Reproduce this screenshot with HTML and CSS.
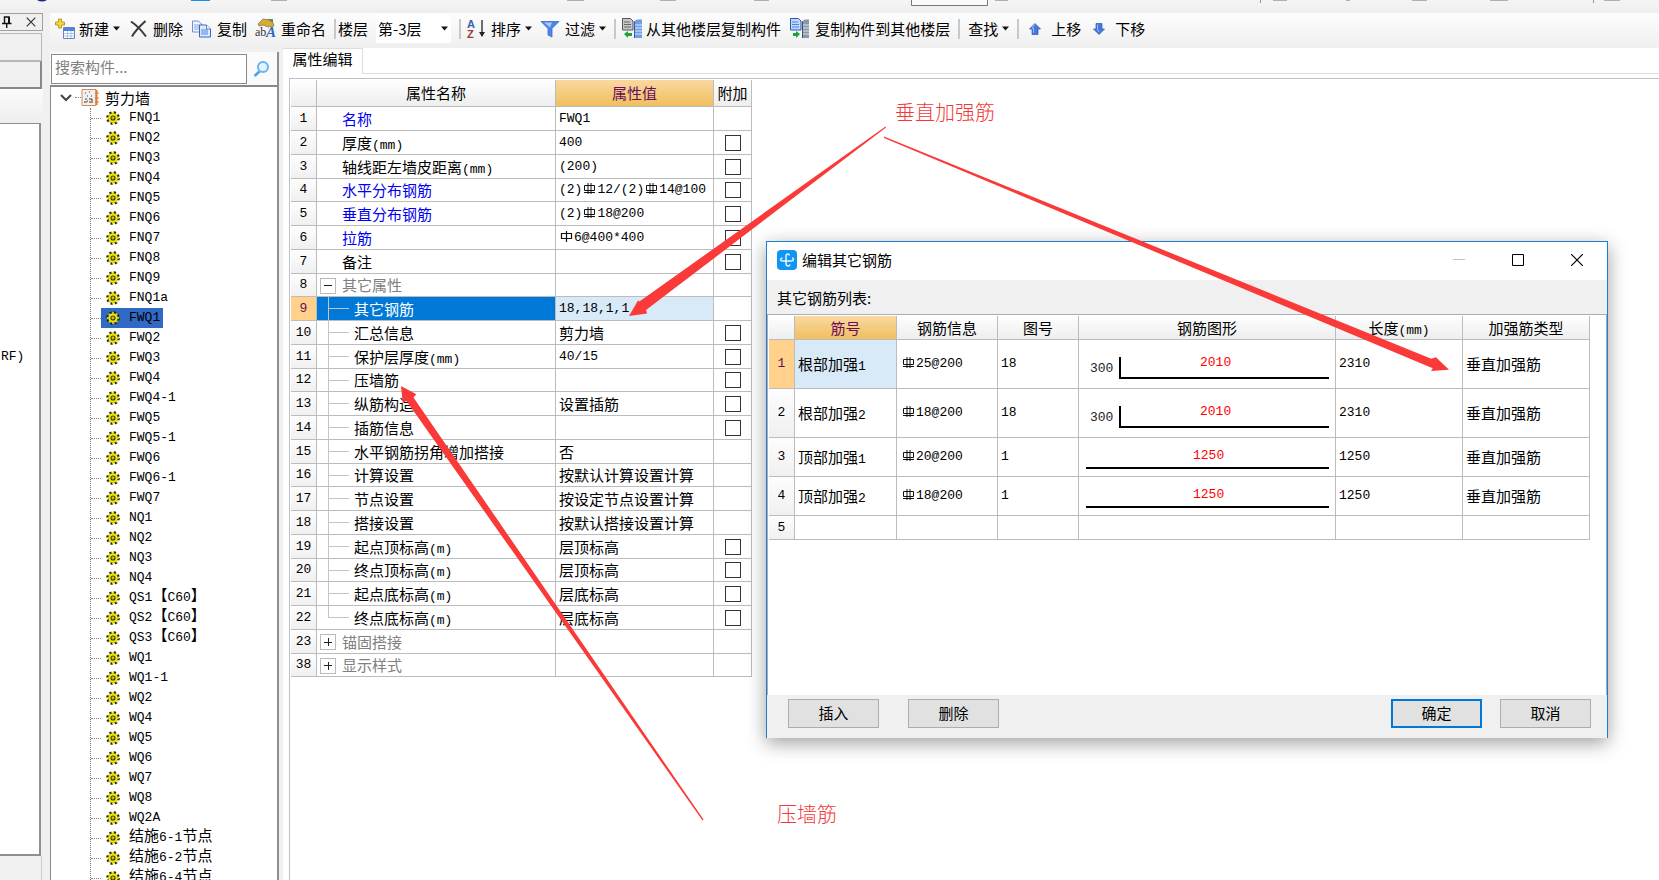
FILE: index.html
```html
<!DOCTYPE html>
<html lang="zh-CN">
<head>
<meta charset="utf-8">
<title>属性编辑</title>
<link rel="stylesheet" href="styles.css">
</head>
<body>
<svg class="defs" aria-hidden="true">
  <symbol id="gear" viewBox="0 0 14 14">
    <circle cx="7" cy="7" r="5.6" fill="none" stroke="#222200" stroke-width="2.4" stroke-dasharray="2.2 2.2"/>
    <circle cx="7" cy="7" r="4.8" fill="#f2ee10" stroke="#55550a" stroke-width=".6"/>
    <path d="M7 1v12M1 7h12M2.8 2.8l8.4 8.4M11.2 2.8l-8.4 8.4" stroke="#e8e410" stroke-width="1.4"/>
    <circle cx="7" cy="7" r="2" fill="#f2ee10" stroke="#333300" stroke-width="1.1"/>
    <circle cx="7" cy="7" r=".6" fill="#333300"/>
  </symbol>
  <symbol id="rebar3" viewBox="0 0 15 15">
    <path d="M2.500 4.500h10v5h-10zM6 2v11M9 2v11M2 11.500h11" fill="none" stroke="#111" stroke-width="1"/>
  </symbol>
  <symbol id="rebar1" viewBox="0 0 15 15">
    <path d="M2.500 4.500h10v5h-10zM7.500 2v11" fill="none" stroke="#111" stroke-width="1.200"/>
  </symbol>
  <symbol id="caret" viewBox="0 0 7 5"><path d="M0 .5h7L3.500 4.500z" fill="#111"/></symbol>
</svg>

<header class="strip">
  <svg width="1659" height="13" aria-hidden="true">
    <path d="M37 0h10q-5 3-10 0z" fill="#1b2a7a"/>
    <path d="M191 0h19v1h-19z" fill="#1a8fe8"/>
    <path d="M271 0h16v1h-16zM567 0h17v1h-17zM660 0h16v1h-16zM754 0h15v1h-15zM995 0h13v1h-13zM1273 0h14v1h-14zM1346 0h4v1h-4zM1412 0h15v1h-15zM1490 0h18v1h-18zM1604 0h16v1h-16z" fill="#b0b0b0"/>
    <path d="M911.500 0v5.500h76V0" fill="#fafafa" stroke="#777"/>
    <path d="M1260.500 0v3M1593.500 0v3" stroke="#999"/>
  </svg>
</header>

<div class="app">
  <aside class="dock">
    <div class="dock-head">
      <button class="dock-btn" aria-label="固定"><svg width="10" height="12" viewBox="0 0 10 12"><path d="M2.500 7V1h4.500v6M0 7.500h9.500M4.700 7.500V12" fill="none" stroke="#111" stroke-width="1.400"/><path d="M6 1h2v6H6z" fill="#111"/></svg></button>
      <button class="dock-btn" aria-label="关闭"><svg width="10" height="10" viewBox="0 0 10 10"><path d="M.7.7l8.600 8.600M9.300.7L.7 9.300" stroke="#333" stroke-width="1.200"/></svg></button>
    </div>
    <div class="dock-box"></div>
    <div class="dock-box dock-box-dark"></div>
    <div class="dock-fade"></div>
    <div class="dock-list"><span class="lat">RF)</span></div>
    <div class="dock-foot"></div>
  </aside>

  <main class="main">
    <nav class="toolbar">
      <button class="tool"><svg width="20" height="22" viewBox="0 0 20 22"><path d="M3.500 1h3v3h3v3h-3v3h-3V7h-3V4h3z" fill="#f6d92c" stroke="#a8891a" stroke-width=".8"/><path d="M8.500 9.500h11v11h-11z" fill="#fff" stroke="#6584b8"/><path d="M9 10h10v3H9z" fill="#4f83df"/><path d="M9 15.500h10M9 18h10M12.500 13v7M16 13v7" stroke="#9cb6e4" stroke-width=".8"/></svg>新建<svg width="7" height="5"><use href="#caret"/></svg></button>
      <button class="tool"><svg width="21" height="18" viewBox="0 0 21 18"><path d="M3 1.500C9 5.500 14 11 18 16.500M17.500 1C12 6 7 11 4 16.500" fill="none" stroke="#3a3a3a" stroke-width="2"/></svg>删除</button>
      <button class="tool"><svg width="22" height="18" viewBox="0 0 22 18"><path d="M1.500 1h6l3 3v8h-9z" fill="#eef4ff" stroke="#6f92cf"/><path d="M3 5h6M3 7h6M3 9h6" stroke="#86a7df"/><path d="M8.500 5h7l4 4v8h-11z" fill="#dfeaff" stroke="#3e68b4"/><path d="M15.500 5v4h4" fill="#fff" stroke="#3e68b4" stroke-width=".8"/><path d="M10 10h7M10 12h7M10 14h7" stroke="#4f83df"/></svg>复制</button>
      <button class="tool"><svg width="22" height="21" viewBox="0 0 22 21"><path d="M3 6l5-5 9 1 2 6-6 1-5-2-4 1z" fill="#d8aa3a" stroke="#8b7134" stroke-width=".7"/><path d="M12 1h6v4z" fill="#5f8e58"/><text x="0" y="18" class="icon-ab">ab</text><text x="11" y="19" class="icon-a">A</text></svg>重命名</button>
      <div class="group group-tight">
        <label for="floor">楼层</label>
        <span class="combo"><select id="floor"><option>第-3层</option></select><svg width="7" height="5"><use href="#caret"/></svg></span>
      </div>
      <div class="group">
        <button class="tool"><svg width="21" height="20" viewBox="0 0 21 20"><text x="1" y="9" class="icon-sort-a">A</text><text x="1" y="19" class="icon-sort-z">Z</text><path d="M16 1v16" stroke="#222" stroke-width="1.300"/><path d="M13 13h6l-3 5z" fill="#222"/></svg>排序<svg width="7" height="5"><use href="#caret"/></svg></button>
        <button class="tool"><svg width="21" height="18" viewBox="0 0 21 18"><path d="M1 1.500h18l-7 7V17l-4-2V8.500z" fill="#4d86e8" stroke="#3b68c6" stroke-width=".8"/><path d="M4 2.500h8l-2 5z" fill="#a8c8fa"/></svg>过滤<svg width="7" height="5"><use href="#caret"/></svg></button>
      </div>
      <div class="group">
        <button class="tool"><svg width="21" height="21" viewBox="0 0 21 21"><path d="M1.500.5h8l2.500 2.500v9H1.500z" fill="#c8c8c8" stroke="#555"/><path d="M3 4h6M3 6.500h7M3 9h7" stroke="#666"/><path d="M3 16l4-3v2h4v3H7v2z" fill="#20a040"/><path d="M13 3.500l3-2h5V20h-8z" fill="#6f9fe4"/><path d="M13 7h8M13 10h8M13 13h8M13 16h8" stroke="#dbe8fb"/><path d="M13.500 3.500V20" stroke="#2a5ea8"/></svg>从其他楼层复制构件</button>
        <button class="tool"><svg width="22" height="21" viewBox="0 0 22 21"><path d="M1.500.5h8l2.500 2.500v9H1.500z" fill="#c4d8fb" stroke="#2455b8"/><path d="M3 4h6M3 6.500h7M3 9h7" stroke="#4f83df"/><path d="M11 16l-4-3v2H4v3h3v2z" fill="#20a040"/><path d="M13 3.500l3-2h4V20h-7z" fill="#8997a6"/><path d="M13 7h7M13 10h7M13 13h7M13 16h7" stroke="#dfe4e9"/><path d="M13.500 3.500V20" stroke="#44525f"/></svg>复制构件到其他楼层</button>
      </div>
      <div class="group group-wide">
        <button class="tool">查找<svg width="7" height="5"><use href="#caret"/></svg></button>
      </div>
      <div class="group group-wide">
        <button class="tool"><svg width="20" height="12" viewBox="0 0 20 12"><path d="M8 .5l5.500 5.500H11v5.500H5V6H2.500z" fill="#4577dc" stroke="#2f58b0" stroke-width=".7"/><path d="M8 1.500L5 5h1.500v5" fill="none" stroke="#9bbcf6"/></svg>上移</button>
        <button class="tool"><svg width="22" height="12" viewBox="0 0 22 12"><path d="M10 11.500L4.500 6H7V.5h6V6h2.500z" fill="#4577dc" stroke="#2f58b0" stroke-width=".7"/><path d="M8.500 1.500v5L10 9" fill="none" stroke="#9bbcf6"/></svg>下移</button>
      </div>
    </nav>

    <div class="work">
      <section class="tree-panel">
        <div class="search">
          <input type="text" placeholder="搜索构件..." aria-label="搜索构件">
          <button class="search-btn" aria-label="搜索"><svg width="18" height="18" viewBox="0 0 18 18"><path d="M6.500 11.500L1.500 16" stroke="#4aa3e6" stroke-width="2.600"/><circle cx="10" cy="7" r="5" fill="#e6f4ff" stroke="#67b4ee" stroke-width="2"/></svg></button>
        </div>
        <div class="tree">
          <div class="root"><svg width="12" height="8" viewBox="0 0 12 8"><path d="M1 1l5 5 5-5" fill="none" stroke="#444" stroke-width="2"/></svg><i></i><svg width="18" height="17" viewBox="0 0 18 17"><path d="M1 .5h14v16H1z" fill="#f2f0ee" stroke="#d08a60"/><path d="M4 4h1M8 3h1M6 7h1M10 7h1M4 10h2M8 10h3M3 13h3M8 13h4M6 12h1M10 11h2" stroke="#777" stroke-width="1.500"/><path d="M15.500 1v15" stroke="#e07a30" stroke-width="2"/><path d="M14 4h4M14 9h4M14 13h4" stroke="#e07a30"/></svg><span>剪力墙</span></div>
          <ul>
            <li><a href="#"><svg><use href="#gear"/></svg>FNQ1</a></li>
            <li><a href="#"><svg><use href="#gear"/></svg>FNQ2</a></li>
            <li><a href="#"><svg><use href="#gear"/></svg>FNQ3</a></li>
            <li><a href="#"><svg><use href="#gear"/></svg>FNQ4</a></li>
            <li><a href="#"><svg><use href="#gear"/></svg>FNQ5</a></li>
            <li><a href="#"><svg><use href="#gear"/></svg>FNQ6</a></li>
            <li><a href="#"><svg><use href="#gear"/></svg>FNQ7</a></li>
            <li><a href="#"><svg><use href="#gear"/></svg>FNQ8</a></li>
            <li><a href="#"><svg><use href="#gear"/></svg>FNQ9</a></li>
            <li><a href="#"><svg><use href="#gear"/></svg>FNQ1a</a></li>
            <li><a href="#" class="current"><svg><use href="#gear"/></svg>FWQ1</a></li>
            <li><a href="#"><svg><use href="#gear"/></svg>FWQ2</a></li>
            <li><a href="#"><svg><use href="#gear"/></svg>FWQ3</a></li>
            <li><a href="#"><svg><use href="#gear"/></svg>FWQ4</a></li>
            <li><a href="#"><svg><use href="#gear"/></svg>FWQ4-1</a></li>
            <li><a href="#"><svg><use href="#gear"/></svg>FWQ5</a></li>
            <li><a href="#"><svg><use href="#gear"/></svg>FWQ5-1</a></li>
            <li><a href="#"><svg><use href="#gear"/></svg>FWQ6</a></li>
            <li><a href="#"><svg><use href="#gear"/></svg>FWQ6-1</a></li>
            <li><a href="#"><svg><use href="#gear"/></svg>FWQ7</a></li>
            <li><a href="#"><svg><use href="#gear"/></svg>NQ1</a></li>
            <li><a href="#"><svg><use href="#gear"/></svg>NQ2</a></li>
            <li><a href="#"><svg><use href="#gear"/></svg>NQ3</a></li>
            <li><a href="#"><svg><use href="#gear"/></svg>NQ4</a></li>
            <li><a href="#"><svg><use href="#gear"/></svg><span>QS1<b>【</b>C60<b>】</b></span></a></li>
            <li><a href="#"><svg><use href="#gear"/></svg><span>QS2<b>【</b>C60<b>】</b></span></a></li>
            <li><a href="#"><svg><use href="#gear"/></svg><span>QS3<b>【</b>C60<b>】</b></span></a></li>
            <li><a href="#"><svg><use href="#gear"/></svg>WQ1</a></li>
            <li><a href="#"><svg><use href="#gear"/></svg>WQ1-1</a></li>
            <li><a href="#"><svg><use href="#gear"/></svg>WQ2</a></li>
            <li><a href="#"><svg><use href="#gear"/></svg>WQ4</a></li>
            <li><a href="#"><svg><use href="#gear"/></svg>WQ5</a></li>
            <li><a href="#"><svg><use href="#gear"/></svg>WQ6</a></li>
            <li><a href="#"><svg><use href="#gear"/></svg>WQ7</a></li>
            <li><a href="#"><svg><use href="#gear"/></svg>WQ8</a></li>
            <li><a href="#"><svg><use href="#gear"/></svg>WQ2A</a></li>
            <li><a href="#"><svg><use href="#gear"/></svg><span><b>结施</b>6-1<b>节点</b></span></a></li>
            <li><a href="#"><svg><use href="#gear"/></svg><span><b>结施</b>6-2<b>节点</b></span></a></li>
            <li><a href="#"><svg><use href="#gear"/></svg><span><b>结施</b>6-4<b>节点</b></span></a></li>
          </ul>
        </div>
      </section>

      <section class="editor">
        <div class="tabs"><button class="tab">属性编辑</button></div>
        <div class="sheet">
          <table class="grid props">
            <colgroup><col class="c-num"><col class="c-name"><col class="c-value"><col class="c-add"></colgroup>
            <thead><tr><th></th><th>属性名称</th><th class="hot">属性值</th><th>附加</th></tr></thead>
            <tbody>
              <tr><th>1</th><td class="key">名称</td><td class="lat">FWQ1</td><td></td></tr>
              <tr><th>2</th><td>厚度<span class="lat">(mm)</span></td><td class="lat">400</td><td><input type="checkbox" aria-label="厚度 附加"></td></tr>
              <tr><th>3</th><td>轴线距左墙皮距离<span class="lat">(mm)</span></td><td class="lat">(200)</td><td><input type="checkbox" aria-label="轴线距左墙皮距离 附加"></td></tr>
              <tr><th>4</th><td class="key">水平分布钢筋</td><td class="lat">(2)<svg class="bar"><use href="#rebar3"/></svg>12/(2)<svg class="bar"><use href="#rebar3"/></svg>14@100</td><td><input type="checkbox" aria-label="水平分布钢筋 附加"></td></tr>
              <tr><th>5</th><td class="key">垂直分布钢筋</td><td class="lat">(2)<svg class="bar"><use href="#rebar3"/></svg>18@200</td><td><input type="checkbox" aria-label="垂直分布钢筋 附加"></td></tr>
              <tr><th>6</th><td class="key">拉筋</td><td class="lat"><svg class="bar"><use href="#rebar1"/></svg>6@400*400</td><td><input type="checkbox" aria-label="拉筋 附加"></td></tr>
              <tr><th>7</th><td>备注</td><td></td><td><input type="checkbox" aria-label="备注 附加"></td></tr>
              <tr><th>8</th><td class="fold"><button class="toggle open" aria-label="收起"></button>其它属性</td><td></td><td></td></tr>
              <tr class="active"><th>9</th><td class="child">其它钢筋</td><td class="lat">18,18,1,1</td><td></td></tr>
              <tr><th>10</th><td class="child">汇总信息</td><td>剪力墙</td><td><input type="checkbox" aria-label="汇总信息 附加"></td></tr>
              <tr><th>11</th><td class="child">保护层厚度<span class="lat">(mm)</span></td><td class="lat">40/15</td><td><input type="checkbox" aria-label="保护层厚度 附加"></td></tr>
              <tr><th>12</th><td class="child">压墙筋</td><td></td><td><input type="checkbox" aria-label="压墙筋 附加"></td></tr>
              <tr><th>13</th><td class="child">纵筋构造</td><td>设置插筋</td><td><input type="checkbox" aria-label="纵筋构造 附加"></td></tr>
              <tr><th>14</th><td class="child">插筋信息</td><td></td><td><input type="checkbox" aria-label="插筋信息 附加"></td></tr>
              <tr><th>15</th><td class="child">水平钢筋拐角增加搭接</td><td>否</td><td></td></tr>
              <tr><th>16</th><td class="child">计算设置</td><td>按默认计算设置计算</td><td></td></tr>
              <tr><th>17</th><td class="child">节点设置</td><td>按设定节点设置计算</td><td></td></tr>
              <tr><th>18</th><td class="child">搭接设置</td><td>按默认搭接设置计算</td><td></td></tr>
              <tr><th>19</th><td class="child">起点顶标高<span class="lat">(m)</span></td><td>层顶标高</td><td><input type="checkbox" aria-label="起点顶标高 附加"></td></tr>
              <tr><th>20</th><td class="child">终点顶标高<span class="lat">(m)</span></td><td>层顶标高</td><td><input type="checkbox" aria-label="终点顶标高 附加"></td></tr>
              <tr><th>21</th><td class="child">起点底标高<span class="lat">(m)</span></td><td>层底标高</td><td><input type="checkbox" aria-label="起点底标高 附加"></td></tr>
              <tr><th>22</th><td class="child last">终点底标高<span class="lat">(m)</span></td><td>层底标高</td><td><input type="checkbox" aria-label="终点底标高 附加"></td></tr>
              <tr><th>23</th><td class="fold"><button class="toggle" aria-label="展开"></button>锚固搭接</td><td></td><td></td></tr>
              <tr><th>38</th><td class="fold"><button class="toggle" aria-label="展开"></button>显示样式</td><td></td><td></td></tr>
            </tbody>
          </table>
        </div>
      </section>
    </div>
  </main>
</div>

<section class="dialog" role="dialog" aria-labelledby="dialog-title">
  <header class="titlebar">
    <svg width="20" height="20" viewBox="0 0 20 20"><rect width="20" height="20" rx="4" fill="#0f96f5"/><path d="M12.500 5.500C12 3.500 9 3.500 9 6v8c0 2.500 3.500 2.500 4 .5M5.500 8C3 8.500 3 11 5.500 11h9c2.500 0 2.500-2.500.5-3" fill="none" stroke="#e8f6ff" stroke-width="1.500"/></svg>
    <h1 id="dialog-title">编辑其它钢筋</h1>
    <button class="win" aria-label="最小化"><svg width="12" height="12"><path d="M0 5.500h12" stroke="#c4c4c4"/></svg></button>
    <button class="win" aria-label="最大化"><svg width="12" height="12"><path d="M.5.5h11v11H.5z" fill="none" stroke="#000"/></svg></button>
    <button class="win" aria-label="关闭"><svg width="12" height="12"><path d="M0 0l12 12M12 0L0 12" stroke="#000" stroke-width="1.200"/></svg></button>
  </header>
  <p class="caption">其它钢筋列表:</p>
  <div class="dialog-body">
    <table class="grid bars">
      <colgroup><col class="d-num"><col class="d-id"><col class="d-info"><col class="d-fig"><col class="d-shape"><col class="d-len"><col class="d-len"></colgroup>
      <thead><tr><th></th><th class="hot">筋号</th><th>钢筋信息</th><th>图号</th><th>钢筋图形</th><th>长度<span class="lat">(mm)</span></th><th>加强筋类型</th></tr></thead>
      <tbody>
        <tr class="tall current-row"><th>1</th><td>根部加强<span class="lat">1</span></td><td class="lat"><svg class="bar"><use href="#rebar3"/></svg>25@200</td><td class="lat">18</td><td class="shape"><svg width="256" height="48"><path d="M41 17v21h209" fill="none" stroke="#000" stroke-width="2"/><text x="11" y="32">300</text><text x="121" y="26" class="dim">2010</text></svg></td><td class="lat">2310</td><td>垂直加强筋</td></tr>
        <tr class="tall"><th>2</th><td>根部加强<span class="lat">2</span></td><td class="lat"><svg class="bar"><use href="#rebar3"/></svg>18@200</td><td class="lat">18</td><td class="shape"><svg width="256" height="48"><path d="M41 17v21h209" fill="none" stroke="#000" stroke-width="2"/><text x="11" y="32">300</text><text x="121" y="26" class="dim">2010</text></svg></td><td class="lat">2310</td><td>垂直加强筋</td></tr>
        <tr class="mid"><th>3</th><td>顶部加强<span class="lat">1</span></td><td class="lat"><svg class="bar"><use href="#rebar3"/></svg>20@200</td><td class="lat">1</td><td class="shape"><svg width="256" height="38"><path d="M7 30h243" stroke="#000" stroke-width="2"/><text x="114" y="21" class="dim">1250</text></svg></td><td class="lat">1250</td><td>垂直加强筋</td></tr>
        <tr class="mid"><th>4</th><td>顶部加强<span class="lat">2</span></td><td class="lat"><svg class="bar"><use href="#rebar3"/></svg>18@200</td><td class="lat">1</td><td class="shape"><svg width="256" height="38"><path d="M7 30h243" stroke="#000" stroke-width="2"/><text x="114" y="21" class="dim">1250</text></svg></td><td class="lat">1250</td><td>垂直加强筋</td></tr>
        <tr><th>5</th><td></td><td></td><td></td><td></td><td></td><td></td></tr>
      </tbody>
    </table>
  </div>
  <footer class="actions">
    <button class="btn">插入</button>
    <button class="btn">删除</button>
    <span class="spacer"></span>
    <button class="btn primary">确定</button>
    <button class="btn">取消</button>
  </footer>
</section>

<svg class="notes" width="1659" height="880" aria-hidden="true">
  <g fill="#fa3a38">
    <path d="M885.500 126.500L639.400 301.500L638 300.500L629 316L647 313.500L646 310L886 127.500z"/>
    <path d="M884 136.500L1431.300 358.700L1436 357.300L1449 369.700L1431 371L1432.700 368.300L884 138z"/>
    <path d="M703.500 819.500L413.500 397.500L416.300 394.300L401 386L402.700 402.700L406.500 401L702.500 820.500z"/>
  </g>
</svg>
<p class="note note-top">垂直加强筋</p>
<p class="note note-bottom">压墙筋</p>
</body>
</html>
```
FILE: styles.css
```css
* { box-sizing: border-box; }

html, body { height: 100%; }

body {
  margin: 0;
  display: flex;
  flex-direction: column;
  overflow: hidden;
  position: relative;
  background: #f0f0f0;
  color: #000;
  font: 15px/20px "Noto Sans CJK SC", sans-serif;
}

button, input, select { font: inherit; color: inherit; }

button {
  padding: 0;
  border: 0;
  background: none;
  white-space: nowrap;
}

p, h1, ul { margin: 0; padding: 0; }

.defs { position: absolute; width: 0; height: 0; }

.lat { font-family: "Liberation Mono", "Noto Sans CJK SC", monospace; font-size: 13px; }
span.lat { line-height: 1; }

.strip { height: 13px; overflow: hidden; background: linear-gradient(#f5f5f5, #eee); }
.strip svg { display: block; }

.app { flex: 1; min-height: 0; display: flex; gap: 7px; }

/* left dock */
.dock { width: 43px; display: flex; flex-direction: column; }
.dock-head {
  height: 18px;
  display: flex;
  align-items: center;
  justify-content: flex-end;
  gap: 14px;
  padding-right: 6px;
  border: 1px solid #a0a0a0;
  border-left: 0;
}
.dock-btn { display: flex; }
.dock-box { height: 28px; margin: 2px 1px 0 0; border: 1px solid #b8b8b8; border-left: 0; }
.dock-box-dark { margin-top: 0; border-right: 2px solid #888; border-bottom: 2px solid #888; }
.dock-fade { height: 34px; background: linear-gradient(#fbfbfb, #eee); }
.dock-list {
  flex: 1;
  margin-right: 2px;
  padding: 220px 0 0 1px;
  background: #fff;
  border: solid #8c9098;
  border-width: 1px 2px 2px 0;
}
.dock-foot { height: 24px; margin-right: 1px; border-right: 1px solid #ccc; }

.main { flex: 1; min-width: 0; display: flex; flex-direction: column; }

/* toolbar */
.toolbar {
  height: 35px;
  display: flex;
  align-items: center;
  gap: 8px;
  padding: 0 0 4px 5px;
  background: linear-gradient(#fdfdfd, #efefef);
}
.tool { display: flex; align-items: center; gap: 4px; }
.tool svg { overflow: visible; }
.group {
  height: 20px;
  display: flex;
  align-items: center;
  gap: 8px;
  padding-left: 5px;
  border-left: 2px solid #c8c8c8;
}
.group-tight { padding-left: 2px; }
.group-wide { padding-left: 8px; }
.combo { width: 75px; height: 28px; display: grid; align-items: center; background: #fff; }
.combo select {
  grid-area: 1 / 1;
  width: 100%;
  appearance: none;
  border: 0;
  padding: 0 2px;
  background: none;
}
.combo svg { grid-area: 1 / 1; justify-self: end; margin-right: 3px; pointer-events: none; }
.icon-ab { font: 12px "Liberation Serif", serif; fill: #333; }
.icon-a { font: italic bold 15px "Liberation Serif", serif; fill: #3568c4; }
.icon-sort-a { font: bold 11px "Liberation Sans", sans-serif; fill: #3a62ac; }
.icon-sort-z { font: bold 11px "Liberation Sans", sans-serif; fill: #a03838; }

.work { flex: 1; min-height: 0; display: flex; }

/* component tree */
.tree-panel {
  width: 229px;
  display: flex;
  flex-direction: column;
  margin-top: 4px;
  border-right: 2px solid #8e8e92;
}
.search { display: flex; height: 33px; padding: 2px 0 1px 1px; background: #fafafa; }
.search input {
  width: 196px;
  padding: 0 3px 4px;
  border: 1px solid #8a8a8a;
  outline: 0;
  background: #fff;
}
.search input::placeholder { color: #808080; opacity: 1; }
.search-btn { flex: 1; display: flex; align-items: center; justify-content: center; }
.tree {
  flex: 1;
  min-height: 0;
  overflow: hidden;
  background: #fff;
  border: solid #85898f;
  border-width: 2px 0 0 1px;
}
.root { height: 21px; display: flex; align-items: center; padding-left: 9px; }
.root i { width: 6px; margin: 0 0 0 3px; border-top: 1px dotted #888; }
.root span { margin-left: 6px; }
.tree ul { margin-left: 39px; list-style: none; border-left: 1px dotted #777; }
.tree li { height: 20px; display: flex; align-items: center; }
.tree li::before { content: ""; width: 10px; border-top: 1px dotted #888; }
.tree a {
  height: 20px;
  display: flex;
  align-items: center;
  gap: 9px;
  padding: 0 3px 0 5px;
  color: #000;
  text-decoration: none;
  font-family: "Liberation Mono", "Noto Sans CJK SC", monospace;
  font-size: 13px;
}
.tree a svg { width: 14px; height: 14px; }
.tree b { font-weight: normal; font-size: 15px; line-height: 1; }
.tree .current { background: #316ac5; }

/* property editor */
.editor {
  flex: 1;
  min-width: 0;
  display: flex;
  flex-direction: column;
  margin-left: 4px;
  background: #fff;
}
.tabs { display: flex; height: 26px; }
.tabs::after { content: ""; flex: 1; border-bottom: 1px solid #ddd; }
.tab { width: 80px; padding-bottom: 5px; border: solid #ddd; border-width: 1px 1px 0 0; }
.sheet {
  flex: 1;
  min-height: 0;
  margin: 4px 0 0 6px;
  padding: 1px 0 0 1px;
  border: solid #bfbfc6;
  border-width: 1px 0 0 1px;
}

.grid { border-collapse: separate; border-spacing: 0; table-layout: fixed; }
.grid th, .grid td {
  padding: 0;
  border: solid #bcbcbc;
  border-width: 0 1px 1px 0;
  font-weight: normal;
  line-height: 18px;
  text-align: left;
  vertical-align: middle;
  white-space: nowrap;
}
.grid thead th { text-align: center; background: linear-gradient(#fefefe, #eee); }
.grid tbody th {
  text-align: center;
  font: 13px/18px "Liberation Mono", monospace;
  background: linear-gradient(#fdfdfd, #f0f0f0);
}
.grid thead .hot { color: #6a0d5f; background: linear-gradient(#f9d9a0, #f0bf5e); }
.bar { width: 15px; height: 15px; vertical-align: -3px; }

.props { width: 461px; }
.c-num { width: 26px; }
.c-name { width: 239px; }
.c-value { width: 158px; }
.c-add { width: 38px; }
.props thead th { height: 27px; }
.props tbody tr { height: 24px; }
.props tbody tr:nth-child(4n) { height: 23px; }
.props td:nth-child(2) { padding-left: 25px; }
.props td:nth-child(3) { padding-left: 3px; }
.props td:nth-child(4) { text-align: center; }
.props .key { color: #0000f0; }
.props td.child {
  padding-left: 37px;
  background:
    linear-gradient(#c4c4c4, #c4c4c4) 11px 0 / 1px 100% no-repeat,
    linear-gradient(#c4c4c4, #c4c4c4) 11px 50% / 21px 1px no-repeat;
}
.props td.last { background-size: 1px 50%, 21px 1px; }
.props td.fold { padding-left: 3px; color: #808080; }
.props .active th { background: #ffd18a; color: #6a0d5f; }
.props .active .child { background-color: #0078d7; color: #fff; }
.props .active td:nth-child(3) { background: #d8e9f8; }
.props input {
  appearance: none;
  display: block;
  width: 16px;
  height: 16px;
  margin: 0 auto;
  border: 1px solid #333;
  background: #fff;
}
.toggle {
  width: 16px;
  height: 16px;
  margin: -2px 6px 0 0;
  vertical-align: middle;
  border: 1px solid #bbb;
  background:
    linear-gradient(#222, #222) 50% 50% / 8px 1px no-repeat,
    linear-gradient(#222, #222) 50% 50% / 1px 8px no-repeat,
    #fff;
}
.toggle.open { background: linear-gradient(#222, #222) 50% 50% / 8px 1px no-repeat, #fff; }

/* dialog window */
.dialog {
  position: absolute;
  left: 766px;
  top: 241px;
  width: 842px;
  display: flex;
  flex-direction: column;
  background: #f0f0f0;
  border: 1px solid #1a7fd0;
  border-bottom: 0;
  box-shadow: 0 5px 18px rgba(0, 0, 0, .38);
}
.titlebar { height: 38px; display: flex; align-items: center; padding: 0 1px 2px 10px; background: #fff; }
.titlebar h1 { flex: 1; margin-left: 5px; font-size: 15px; font-weight: normal; }
.win { width: 59px; height: 36px; display: flex; align-items: center; justify-content: center; }
.caption { height: 34px; padding: 8px 10px; }
.dialog-body {
  min-height: 381px;
  padding: 1px 0 0 1px;
  background: #fff;
  border: 1px solid #acacb2;
  border-bottom: 0;
}
.bars { width: 821px; }
.d-num { width: 26px; }
.d-id { width: 102px; }
.d-info { width: 101px; }
.d-fig { width: 81px; }
.d-shape { width: 257px; }
.d-len { width: 127px; }
.bars thead th { height: 24px; }
.bars tbody tr { height: 24px; }
.bars tbody .tall { height: 49px; }
.bars tbody .mid { height: 39px; }
.bars td { padding-left: 3px; }
.bars td:nth-child(3) { padding-left: 4px; }
.bars td.shape { padding: 0; }
.bars .shape svg { display: block; }
.bars text { font: 13px "Liberation Mono", monospace; fill: #222; }
.bars .dim { fill: #f00; }
.bars .current-row th { background: #ffd18a; color: #6a0d5f; }
.bars .current-row td:nth-child(2) { background: #d8e9f8; }
.actions { display: flex; height: 43px; padding: 4px 16px 0 21px; gap: 18px; }
.spacer { flex: 1; }
.btn {
  width: 91px;
  height: 29px;
  padding-bottom: 2px;
  background: #e1e1e1;
  border: 1px solid #adadad;
}
.btn + .btn { margin-left: 11px; }
.primary { border: 2px solid #0078d7; }
.primary + .btn { margin-left: 0; }

/* annotations */
.notes { position: absolute; left: 0; top: 0; pointer-events: none; }
.note { position: absolute; color: #f23838; font-size: 20px; line-height: 24px; font-weight: 300; }
.note-top { left: 895px; top: 100px; }
.note-bottom { left: 777px; top: 802px; }
```
